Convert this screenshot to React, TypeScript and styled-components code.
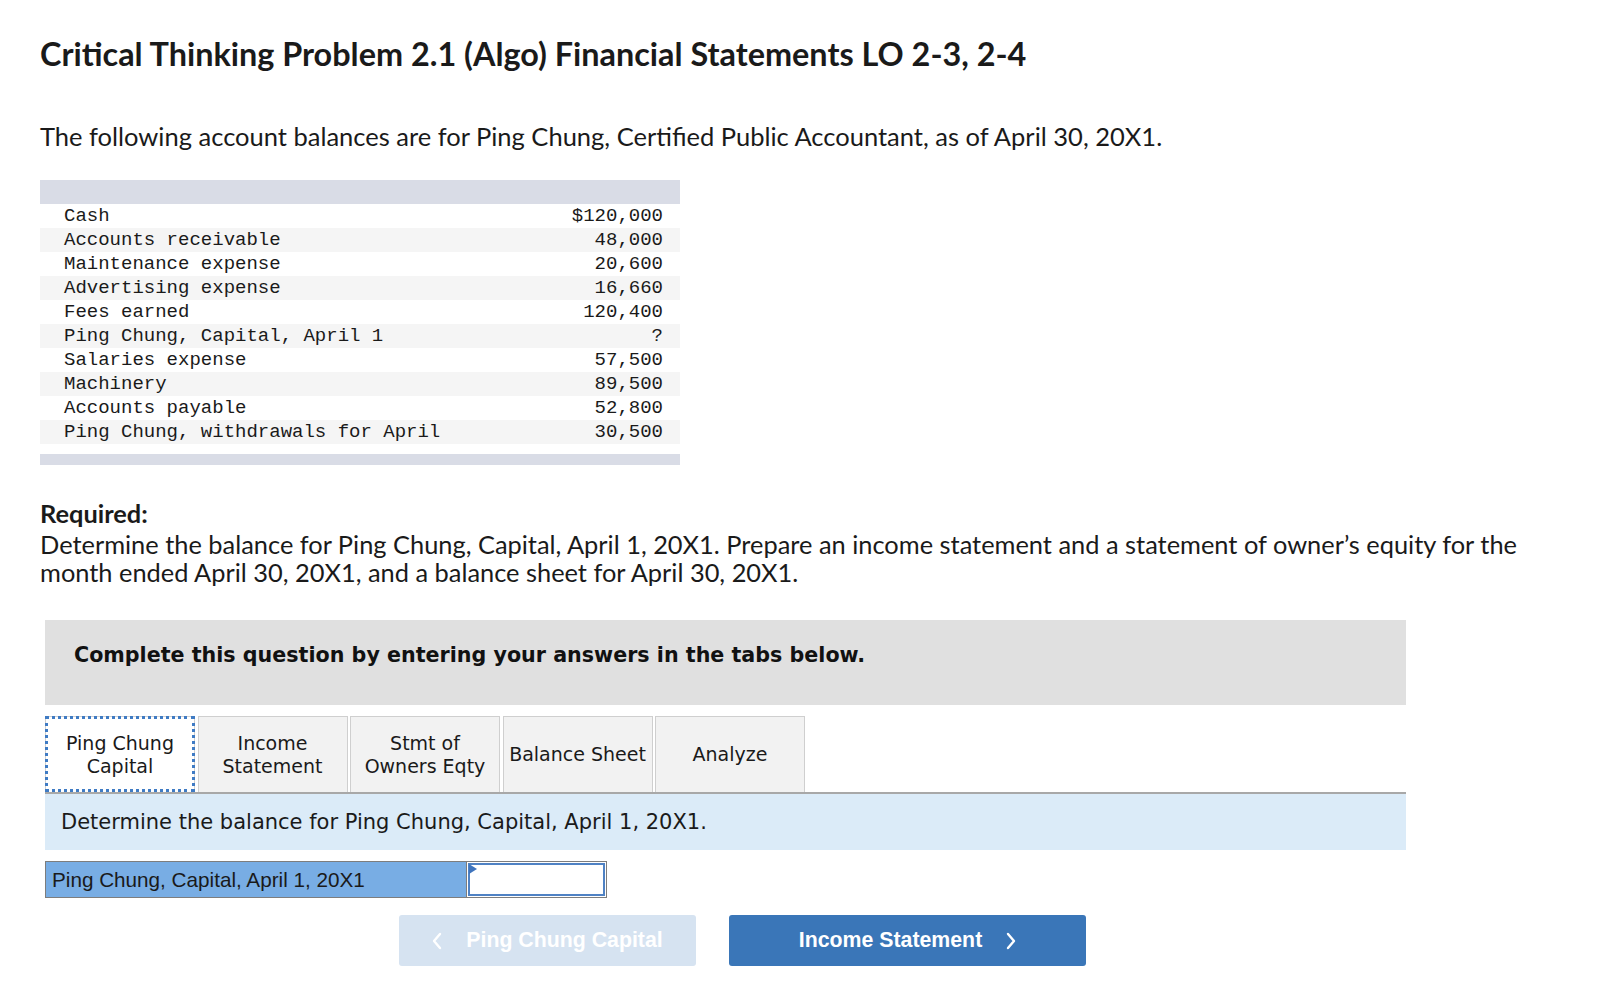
import React from "react";
import styled, { createGlobalStyle } from "styled-components";

const Global = createGlobalStyle`
  html, body { margin: 0; padding: 0; background: #fff; }
  body { font-family: Lato, "Open Sans", sans-serif; color: #1a1a1a; }
`;

const Page = styled.div`
  padding: 30px 0 0 40px;
  width: 1540px;
`;

const Title = styled.h1`
  margin: 0;
  font-family: Lato, sans-serif;
  font-weight: 700;
  font-size: 32.4px;
  line-height: 48px;
  color: #1a1a1a;
`;

const Intro = styled.p`
  margin: 43px 0 0;
  font-size: 25.5px;
  line-height: 30px;
`;

const DataTable = styled.div`
  margin-top: 29px;
  width: 640px;
  display: flex;
  flex-direction: column;
  font-family: "Liberation Mono", monospace;
  font-size: 19px;
`;

const Band = styled.div<{ $h: number }>`
  height: ${(p) => p.$h}px;
  background: #d9dce6;
`;

const Row = styled.div<{ $shade: boolean }>`
  height: 24px;
  display: flex;
  align-items: center;
  justify-content: space-between;
  padding: 0 17px 0 24px;
  background: ${(p) => (p.$shade ? "#f5f5f5" : "#ffffff")};
  color: #1a1a1a;
`;

const Gap = styled.div`
  height: 10px;
`;

const Required = styled.div`
  margin-top: 34px;
  width: 1535px;
  font-size: 25.4px;
  line-height: 28px;
`;

const ReqHead = styled.div`
  font-weight: 700;
  margin-bottom: 3px;
`;

const TabsArea = styled.div`
  margin: 34px 0 0 5px;
  width: 1361px;
`;

const Notice = styled.div`
  height: 85px;
  background: #e0e0e0;
  padding: 22px 0 0 29px;
  box-sizing: border-box;
  font-family: "DejaVu Sans", Verdana, sans-serif;
  font-weight: 700;
  font-size: 20.65px;
  line-height: 26px;
  color: #111;
`;

const TabRow = styled.div`
  margin-top: 11px;
  display: flex;
  gap: 2.5px;
  border-bottom: 2px solid #a8a8a8;
  height: 78px;
  box-sizing: border-box;
  align-items: flex-end;
`;

const Tab = styled.div<{ $active?: boolean }>`
  width: 150px;
  height: 76px;
  box-sizing: border-box;
  display: flex;
  align-items: center;
  justify-content: center;
  text-align: center;
  font-family: "DejaVu Sans", Verdana, sans-serif;
  font-size: 19px;
  line-height: 22.5px;
  color: #1a1a1a;
  border: 1px solid #cfcfcf;
  border-bottom: none;
  background: ${(p) => (p.$active ? "#ffffff" : "#f2f2f2")};
  outline: ${(p) => (p.$active ? "3px dotted #3f7bc4" : "none")};
  outline-offset: -3px;
`;

const InfoBand = styled.div`
  height: 56px;
  background: #dbebf8;
  display: flex;
  align-items: center;
  padding-left: 16px;
  font-family: "DejaVu Sans", Verdana, sans-serif;
  font-size: 21px;
  color: #1a1a1a;
`;

const AnswerRow = styled.div`
  margin-top: 11px;
  display: flex;
  height: 37px;
`;

const AnswerLabel = styled.div`
  width: 421px;
  box-sizing: border-box;
  background: #78ade4;
  border: 1px solid #7d7d7d;
  border-right: none;
  display: flex;
  align-items: center;
  padding-left: 6px;
  font-family: "Liberation Sans", Arial, sans-serif;
  font-size: 20.7px;
  color: #1a1a1a;
`;

const AnswerCell = styled.div`
  width: 141px;
  box-sizing: border-box;
  border: 1px solid #7d7d7d;
  padding: 1px;
  background: #fff;
  position: relative;
`;

const AnswerInput = styled.input`
  width: 100%;
  height: 100%;
  box-sizing: border-box;
  border: 2px solid #4f82c4;
  margin: 0;
  padding: 0 6px;
  outline: none;
  background: #fff;
`;

const Flag = styled.div`
  position: absolute;
  left: 2px;
  top: 2px;
  width: 0;
  height: 0;
  border-top: 5px solid transparent;
  border-bottom: 5px solid transparent;
  border-left: 8px solid #3f74bd;
`;

const NavRow = styled.div`
  margin-top: 17px;
  display: flex;
  gap: 33px;
  padding-left: 354px;
`;

const NavButton = styled.button<{ $primary?: boolean; $w: number }>`
  width: ${(p) => p.$w}px;
  height: 51px;
  border: none;
  border-radius: 3px;
  background: ${(p) => (p.$primary ? "#3a76b8" : "#d6e3f1")};
  color: #ffffff;
  font-family: "Liberation Sans", Arial, sans-serif;
  font-weight: 700;
  font-size: 21.3px;
  display: flex;
  align-items: center;
  justify-content: center;
  gap: 24px;
  padding: 0;
`;

const rows: [string, string][] = [
  ["Cash", "$120,000"],
  ["Accounts receivable", "48,000"],
  ["Maintenance expense", "20,600"],
  ["Advertising expense", "16,660"],
  ["Fees earned", "120,400"],
  ["Ping Chung, Capital, April 1", "?"],
  ["Salaries expense", "57,500"],
  ["Machinery", "89,500"],
  ["Accounts payable", "52,800"],
  ["Ping Chung, withdrawals for April", "30,500"],
];

const Chevron = ({ dir }: { dir: "left" | "right" }) => (
  <svg width="10" height="18" viewBox="0 0 10 18" fill="none">
    <path
      d={dir === "left" ? "M8 2 L2 9 L8 16" : "M2 2 L8 9 L2 16"}
      stroke="#ffffff"
      strokeWidth="2.4"
      strokeLinecap="round"
      strokeLinejoin="round"
    />
  </svg>
);

export default function App() {
  return (
    <Page>
      <Global />
      <Title>Critical Thinking Problem 2.1 (Algo) Financial Statements LO 2-3, 2-4</Title>
      <Intro>
        The following account balances are for Ping Chung, Certified Public Accountant, as of April 30, 20X1.
      </Intro>
      <DataTable>
        <Band $h={24} />
        {rows.map(([name, value], i) => (
          <Row key={name} $shade={i % 2 === 1}>
            <span>{name}</span>
            <span>{value}</span>
          </Row>
        ))}
        <Gap />
        <Band $h={11} />
      </DataTable>
      <Required>
        <ReqHead>Required:</ReqHead>
        Determine the balance for Ping Chung, Capital, April 1, 20X1. Prepare an income statement and a statement of
        owner’s equity for the month ended April 30, 20X1, and a balance sheet for April 30, 20X1.
      </Required>
      <TabsArea>
        <Notice>Complete this question by entering your answers in the tabs below.</Notice>
        <TabRow>
          <Tab $active>
            Ping Chung
            <br />
            Capital
          </Tab>
          <Tab>
            Income
            <br />
            Statement
          </Tab>
          <Tab>
            Stmt of
            <br />
            Owners Eqty
          </Tab>
          <Tab>Balance Sheet</Tab>
          <Tab>Analyze</Tab>
        </TabRow>
        <InfoBand>Determine the balance for Ping Chung, Capital, April 1, 20X1.</InfoBand>
        <AnswerRow>
          <AnswerLabel>Ping Chung, Capital, April 1, 20X1</AnswerLabel>
          <AnswerCell>
            <AnswerInput aria-label="Ping Chung, Capital, April 1, 20X1" />
            <Flag />
          </AnswerCell>
        </AnswerRow>
        <NavRow>
          <NavButton $w={297}>
            <Chevron dir="left" />
            Ping Chung Capital
          </NavButton>
          <NavButton $primary $w={357}>
            Income Statement
            <Chevron dir="right" />
          </NavButton>
        </NavRow>
      </TabsArea>
    </Page>
  );
}
